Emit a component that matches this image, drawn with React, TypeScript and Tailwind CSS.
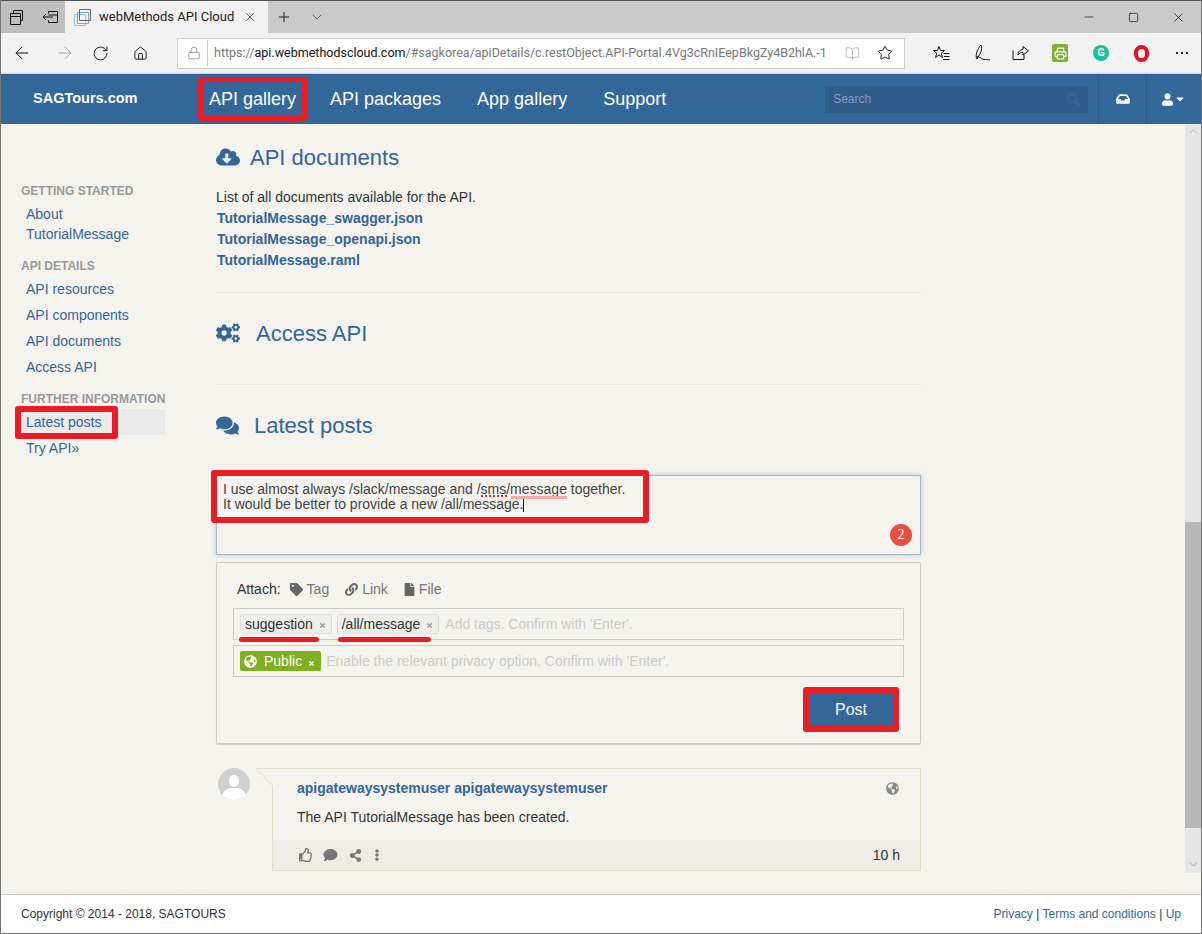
import {
  FaCloudDownloadAlt,
  FaCogs,
  FaComments,
  FaTag,
  FaLink,
  FaFile,
  FaGlobeAmericas,
  FaRegThumbsUp,
  FaComment,
  FaShareAlt,
  FaEllipsisV,
  FaInbox,
  FaUser,
  FaCaretDown,
  FaSearch,
  FaTimes,
} from "react-icons/fa";
import { ArrowLeft, ArrowRight, RotateCw, Home, Lock, BookOpen, Star, X, Plus, ChevronDown, Minus, Square, Printer } from "lucide-react";

function BrowserChrome() {
  return (
    <div className="font-['Roboto',sans-serif] shrink-0">
      {/* Tab strip */}
      <div className="h-[33px] bg-[#cacaca] flex items-stretch border-t border-[#555] text-[#111]">
        <div className="w-[64px] flex items-center pl-[9px] gap-[18px] bg-[#bfbfbf]">
          <svg className="w-[15px] h-[15px]" viewBox="0 0 15 15" fill="none" stroke="currentColor">
            <path d="M3.5 3.5V.5H12.5V10.5H10.5M.5 3.5H10.5V14.5H.5ZM.5 6.5H10.5" />
          </svg>
          <svg className="w-[15px] h-[15px]" viewBox="0 0 15 15" fill="none" stroke="currentColor">
            <path d="M5.5 3.5V1.5H14.5V12.5H5.5V10.5M0 7H10M3 4L0 7L3 10M5.5 5H14.5" />
          </svg>
        </div>
        <div className="w-[203px] bg-[#f2f2f2] flex items-center pl-[9px]">
          <svg className="w-[17px] h-[17px] mr-[8px] shrink-0" viewBox="0 0 17 17" fill="none">
            <path d="M.5 5.5H11.5V16.5H.5Z" stroke="#8cc4e4" />
            <path d="M3.5 3.5H14.5V14.5H3.5Z" stroke="#7aa7c4" />
            <path d="M5.5 .5H16.5V11.5H5.5Z" stroke="#666" />
          </svg>
          <span className="text-[13px] text-[#222] whitespace-nowrap">webMethods API Cloud</span>
          <X className="w-[14px] h-[14px] ml-[9px] text-[#333] shrink-0" strokeWidth={1.3} />
        </div>
        <div className="flex items-center pl-[8px] gap-[17px]">
          <Plus className="w-[16px] h-[16px]" strokeWidth={1.4} />
          <ChevronDown className="w-[16px] h-[16px] text-[#444]" strokeWidth={1.2} />
        </div>
        <div className="ml-auto flex items-center gap-[32px] pr-[15px]">
          <Minus className="w-[14px] h-[14px]" strokeWidth={1.2} />
          <Square className="w-[11px] h-[11px]" strokeWidth={1.5} />
          <X className="w-[15px] h-[15px]" strokeWidth={1.2} />
        </div>
      </div>
      {/* Address bar */}
      <div className="h-[41px] bg-[#f2f2f2] flex items-center border-b border-[#d0d0d0] text-[#111]">
        <div className="w-[176px] flex items-center pl-[11px] shrink-0">
          <ArrowLeft className="w-[20px] h-[20px]" strokeWidth={1.2} />
          <ArrowRight className="w-[20px] h-[20px] ml-[23px] text-[#aaa]" strokeWidth={1.2} />
          <RotateCw className="w-[17px] h-[17px] ml-[17px]" strokeWidth={1.3} />
          <Home className="w-[15px] h-[15px] ml-[24px]" strokeWidth={1.5} />
        </div>
        <div className="w-[728px] h-[31px] bg-white border border-[#cfcfcf] flex items-center shrink-0">
          <Lock className="w-[14px] h-[14px] text-[#888] ml-[9px] shrink-0" strokeWidth={1.3} />
          <div className="w-px h-[26px] bg-[#ccc] ml-[6px] mr-[6px] shrink-0" />
          <span className="text-[12.5px] text-[#777] whitespace-nowrap">
            https://<span className="text-[#111]">api.webmethodscloud.com</span>/#sagkorea/apiDetails/c.restObject.API-Portal.4Vg3cRnIEepBkgZy4B2hlA.-1
          </span>
          <BookOpen className="w-[15px] h-[15px] text-[#aaa] ml-[18px] shrink-0" strokeWidth={1.2} />
          <Star className="w-[16px] h-[16px] ml-[17px] shrink-0" strokeWidth={1.4} />
        </div>
        <div className="flex items-center pl-[28px]">
          <svg className="w-[17px] h-[17px]" viewBox="0 0 17 17" fill="none" stroke="currentColor">
            <path d="M6 1.5L7.5 5.5H11.5L8.3 8.2L9.5 12.5L6 10L2.5 12.5L3.7 8.2L.5 5.5H4.5Z" />
            <path d="M10.5 8.5H16.5M11 11.5H16.5M10 14.5H16.5" />
          </svg>
          <svg className="w-[17px] h-[18px] ml-[24px]" viewBox="0 0 17 18" fill="none" stroke="currentColor">
            <path d="M3 15C1 12 3 5 7 1C8 3 8 6 6 10L3 15L4 12C5 14 6 13 7 14C8 16 11 15 16 16" />
          </svg>
          <svg className="w-[17px] h-[16px] ml-[21px]" viewBox="0 0 17 16" fill="none" stroke="currentColor">
            <path d="M1 5.5V14.5H12V10M6 10C6 6 9 4.5 11 4.5V1.5L16.5 6L11 10V7.5C9 7.5 7 8 6 10Z" />
          </svg>
          <div className="w-[16px] h-[18px] ml-[23px] bg-[#7cb031] rounded-[2px] flex items-center justify-center">
            <Printer className="w-[13px] h-[13px] text-white" strokeWidth={2} />
          </div>
          <div className="w-[16px] h-[16px] ml-[25px] rounded-full bg-[#15c39a] flex items-center justify-center">
            <span className="text-white text-[11px] font-bold">G</span>
          </div>
          <div className="w-[15px] h-[17px] ml-[25px] rounded-full border-[4px] border-[#e8101e]" />
          <div className="ml-[27px] flex gap-[3px]">
            <span className="w-[2px] h-[2px] bg-[#222]" />
            <span className="w-[2px] h-[2px] bg-[#222]" />
            <span className="w-[2px] h-[2px] bg-[#222]" />
          </div>
        </div>
      </div>
    </div>
  );
}

function TopNav() {
  return (
    <div className="h-[50px] bg-[#336699] flex items-center text-white shrink-0">
      <div className="w-[197px] pl-[32px] text-[14.5px] font-bold">SAGTours.com</div>
      <div className="h-[44px] w-[109px] border-[5px] border-[#ed1c24] rounded-[3px] px-[6px] flex items-center text-[18px] whitespace-nowrap">API gallery</div>
      <div className="flex items-center gap-[36px] text-[18px] ml-[23px]">
        <span>API packages</span>
        <span>App gallery</span>
        <span>Support</span>
      </div>
      <div className="ml-[159px] w-[263px] h-[27px] bg-[#2f5c8a] flex items-center justify-between px-[8px] text-[12px] text-[#7f9dbd]">
        Search
        <FaSearch className="w-[13px] h-[13px] text-[#336699]" />
      </div>
      <div className="ml-[10px] w-[49px] h-[50px] border-x border-[#2f5c8a] flex items-center justify-center">
        <FaInbox className="w-[14px] h-[14px]" />
      </div>
      <div className="flex-1 flex items-center justify-center gap-[1px]">
        <FaUser className="w-[11px] h-[13px]" />
        <FaCaretDown className="w-[12px] h-[12px]" />
      </div>
    </div>
  );
}

function SideHead({ children, className }: { children: string; className: string }) {
  return <div className={`text-[12px] font-bold text-[#999] leading-[14px] ${className}`}>{children}</div>;
}

function SideLink({ children, active }: { children: string; active?: boolean }) {
  return <div className={`h-[26px] leading-[26px] pl-[5px] text-[14px] text-[#336699] ${active ? "bg-[#eaeaea]" : ""}`}>{children}</div>;
}

function Sidebar() {
  return (
    <div className="w-[215px] shrink-0 pl-[20px] pr-[51px] pt-[60px] relative">
      <SideHead className="">GETTING STARTED</SideHead>
      <div className="pl-[5px] pt-[6px] text-[14px] leading-[20px] text-[#336699]">
        <div>About</div>
        <div>TutorialMessage</div>
      </div>
      <SideHead className="mt-[15px]">API DETAILS</SideHead>
      <div className="mt-[3px]">
        <SideLink>API resources</SideLink>
        <SideLink>API components</SideLink>
        <SideLink>API documents</SideLink>
        <SideLink>Access API</SideLink>
      </div>
      <SideHead className="mt-[12px] whitespace-nowrap">FURTHER INFORMATION</SideHead>
      <div className="mt-[3px]">
        <SideLink active>Latest posts</SideLink>
        <SideLink>Try API»</SideLink>
      </div>
      {/* annotation */}
      <div className="absolute left-[14px] top-[282px] w-[103px] h-[33px] border-[6px] border-[#ed1c24] rounded-[3px]" />
    </div>
  );
}

function Composer() {
  return (
    <>
      <div className="relative h-[80px] border border-[#a9b7c4] shadow-[0_0_4px_rgba(102,153,204,0.5)] px-[6px] pt-[6px] text-[14px] leading-[14px] text-[#444]">
        <div className="whitespace-nowrap">I use almost always /slack/message and /sms/message together.</div>
        <div className="whitespace-nowrap">
          It would be better to provide a new /all/message.<span className="inline-block w-px h-[16px] bg-[#111] align-text-bottom" />
        </div>
        <div className="absolute left-[-6px] top-[-6px] w-[438px] h-[53px] border-[6px] border-[#ed1c24] rounded-[3px]" />
        <div className="absolute left-[264px] top-[19px] w-[26px] h-[2px] border-b-2 border-dotted border-[#e0302a]" />
        <div className="absolute left-[294px] top-[20px] w-[56px] h-[3px] bg-[#f4a9a9]" />
        <div className="absolute right-[8px] bottom-[8px] w-[22px] h-[22px] rounded-full bg-[#e94f43] text-white text-[14px] flex items-center justify-center font-['Liberation_Serif',serif]">2</div>
      </div>
      <div className="relative mt-[7px] h-[182px] border border-[#ccc] rounded-[2px] shadow-[0_1px_1px_rgba(0,0,0,0.15)] px-[16px] pt-[18px]">
        <div className="flex items-center h-[16px] pl-[4px] text-[14px] text-[#333]">
          <span className="mr-[9px]">Attach:</span>
          <span className="flex items-center gap-[4px] text-[#777] mr-[16px]"><FaTag className="w-[13px] h-[13px] text-[#666]" />Tag</span>
          <span className="flex items-center gap-[4px] text-[#777] mr-[16px]"><FaLink className="w-[13px] h-[13px] text-[#666]" />Link</span>
          <span className="flex items-center gap-[4px] text-[#777]"><FaFile className="w-[11px] h-[13px] text-[#666]" />File</span>
        </div>
        <div className="mt-[11px] h-[32px] border border-[#ccc] flex items-center pl-[6px] text-[14px]">
          <span className="relative h-[20px] flex items-center bg-[#eeeeea] border border-[#ddd] rounded-[3px] pl-[4px] pr-[5px] text-[#333] mr-[5px]">
            suggestion<FaTimes className="w-[7px] h-[7px] text-[#999] ml-[6px] mt-[3px]" />
            <span className="absolute left-[-2px] top-[22px] w-[80px] h-[5px] rounded-full bg-[#ed1c24]" />
          </span>
          <span className="relative h-[20px] flex items-center bg-[#eeeeea] border border-[#ddd] rounded-[3px] pl-[4px] pr-[5px] text-[#333] mr-[6px]">
            /all/message<FaTimes className="w-[7px] h-[7px] text-[#999] ml-[6px] mt-[3px]" />
            <span className="absolute left-[0px] top-[22px] w-[93px] h-[5px] rounded-full bg-[#ed1c24]" />
          </span>
          <span className="text-[#ccc]">Add tags. Confirm with 'Enter'.</span>
        </div>
        <div className="mt-[5px] h-[32px] border border-[#ccc] flex items-center pl-[6px] text-[14px]">
          <span className="h-[20px] flex items-center bg-[#80b020] rounded-[2px] pl-[4px] pr-[6px] text-white mr-[5px]">
            <FaGlobeAmericas className="w-[13px] h-[13px] mr-[7px]" />Public<FaTimes className="w-[7px] h-[7px] ml-[6px] mt-[4px]" />
          </span>
          <span className="text-[#ccc]">Enable the relevant privacy option. Confirm with 'Enter'.</span>
        </div>
        <div className="mt-[10px] flex justify-end">
          <div className="w-[96px] h-[45px] mr-[5px] border-[6px] border-[#ed1c24] rounded-[3px] bg-[#336699] text-white text-[16px] flex items-center justify-center">Post</div>
        </div>
      </div>
    </>
  );
}

function PostCard() {
  return (
    <div className="mt-[24px] flex">
      <div className="w-[32px] h-[32px] rounded-full bg-[#cfcfcf] ml-[2px] overflow-hidden relative shrink-0">
        <div className="w-[10px] h-[12px] rounded-full bg-white mx-auto mt-[7px]" />
        <div className="w-[24px] h-[18px] rounded-full bg-white mx-auto mt-[1px]" />
      </div>
      <div className="relative ml-[22px] flex-1 h-[103px] border border-[#e0dfcc] flex flex-col">
        <svg className="absolute left-[-17px] top-[-1px]" width="18" height="20" viewBox="0 0 18 20">
          <path d="M0 .5H18V19z" fill="#f4f3ee" />
          <path d="M0 .5L17 18" stroke="#e0dfcc" fill="none" />
          <path d="M0 .5H18" stroke="#e0dfcc" fill="none" />
        </svg>
        <div className="flex-1 pl-[24px] pr-[21px] pt-[9px]">
          <div className="flex items-center justify-between">
            <span className="text-[14px] font-bold text-[#336699]">apigatewaysystemuser apigatewaysystemuser</span>
            <FaGlobeAmericas className="w-[13px] h-[13px] text-[#888]" />
          </div>
          <div className="mt-[8px] text-[14px] text-[#333]">The API TutorialMessage has been created.</div>
        </div>
        <div className="h-[30px] bg-[#eeece4] flex items-center pl-[26px] pr-[20px] text-[#777]">
          <FaRegThumbsUp className="w-[14px] h-[14px] mr-[10px]" />
          <FaComment className="w-[15px] h-[14px] mr-[11px]" />
          <FaShareAlt className="w-[13px] h-[13px] mr-[9px]" />
          <FaEllipsisV className="w-[12px] h-[12px]" />
          <span className="ml-auto text-[14px] text-[#333]">10 h</span>
        </div>
      </div>
    </div>
  );
}

function Heading({ icon, label, gap }: { icon: React.ReactNode; label: string; gap: string }) {
  return (
    <div className={`flex items-center h-[28px] text-[22px] text-[#336699] ${gap}`}>
      {icon}
      <span>{label}</span>
    </div>
  );
}

function Content() {
  return (
    <div className="w-[705px] shrink-0 pt-[19px]">
      <Heading icon={<FaCloudDownloadAlt className="w-[24px] h-[24px]" />} label="API documents" gap="gap-[10px]" />
      <div className="mt-[16px] text-[14px] leading-[21px] text-[#333]">
        <div>List of all documents available for the API.</div>
        <div className="font-bold text-[#336699] pl-px">
          <div>TutorialMessage_swagger.json</div>
          <div>TutorialMessage_openapi.json</div>
          <div>TutorialMessage.raml</div>
        </div>
      </div>
      <div className="mt-[21px] h-px bg-[#e6e6e6]" />
      <div className="mt-[26px]">
        <Heading icon={<FaCogs className="w-[24px] h-[24px]" />} label="Access API" gap="gap-[16px]" />
      </div>
      <div className="mt-[37px] h-px bg-[#e6e6e6]" />
      <div className="mt-[26px]">
        <Heading icon={<FaComments className="w-[23px] h-[23px]" />} label="Latest posts" gap="gap-[15px]" />
      </div>
      <div className="mt-[36px]">
        <Composer />
      </div>
      <PostCard />
    </div>
  );
}

function Scrollbar() {
  return (
    <div className="ml-auto w-[16px] h-[749px] bg-[#e6e6e6] flex flex-col shrink-0">
      <ChevronDown className="w-[13px] h-[13px] mx-auto mt-[1px] rotate-180 text-[#aaa]" strokeWidth={1.5} />
      <div className="mt-[384px] h-[306px] bg-[#b7b7b7]" />
      <ChevronDown className="w-[13px] h-[13px] mx-auto mt-[30px] text-[#999]" strokeWidth={1.5} />
    </div>
  );
}

export default function App() {
  return (
    <div className="w-[1202px] h-[934px] overflow-hidden flex flex-col border-x border-b border-[#777] font-['Liberation_Sans',Arial,sans-serif]">
      <BrowserChrome />
      <TopNav />
      <div className="flex h-[771px] bg-[#f4f3ee] border-b border-[#ccc] shrink-0">
        <Sidebar />
        <Content />
        <Scrollbar />
      </div>
      <div className="flex-1 bg-white flex items-center justify-between pl-[20px] pr-[20px] text-[12px] text-[#333]">
        <span>Copyright © 2014 - 2018, SAGTOURS</span>
        <span className="text-[#336699]">
          Privacy <span className="text-[#333]">|</span> Terms and conditions <span className="text-[#333]">|</span> Up
        </span>
      </div>
    </div>
  );
}
